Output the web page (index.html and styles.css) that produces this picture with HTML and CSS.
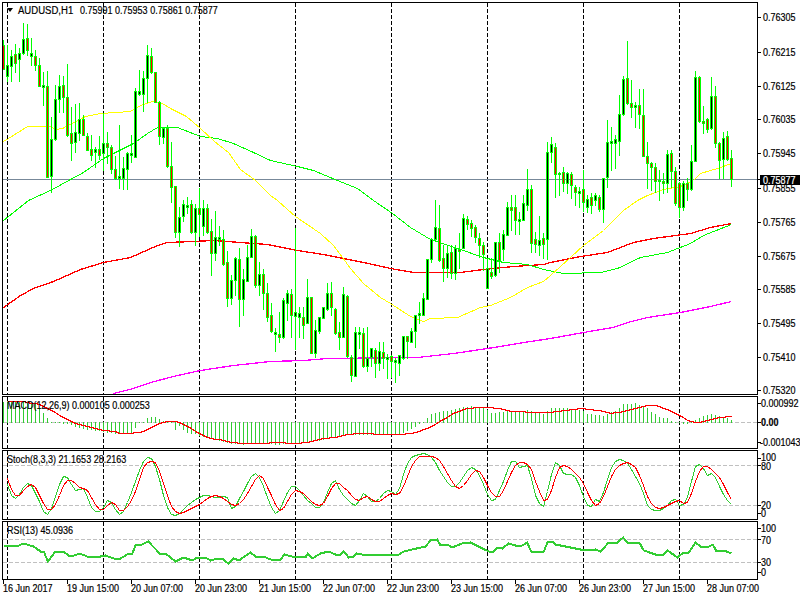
FILE: index.html
```html
<!DOCTYPE html>
<html lang="en">
<head>
<meta charset="utf-8">
<title>AUDUSD,H1</title>
<link rel="stylesheet" href="styles.css">
</head>
<body>
<main class="terminal">
  <section class="row row-main">
    <svg class="plot" id="plot-main" viewBox="3 3 754 391">
      <g id="main-layer"></g>
      <path class="marker" d="M7 8h6l-3 4z"/>
      <text class="label title" x="18" y="14">AUDUSD,H1</text>
      <text class="label" x="80" y="14">0.75991 0.75953 0.75861 0.75877</text>
    </svg>
    <svg class="axis" viewBox="758 2 42 393">
      <path class="tick" d="M758 17.5h3M758 52.5h3M758 86.5h3M758 119.5h3M758 153.5h3M758 188.5h3M758 222.5h3M758 256.5h3M758 289.5h3M758 323.5h3M758 357.5h3M758 390.5h3"/>
      <text class="label" x="763" y="21">0.76305</text>
      <text class="label" x="763" y="56">0.76215</text>
      <text class="label" x="763" y="90">0.76125</text>
      <text class="label" x="763" y="123">0.76035</text>
      <text class="label" x="763" y="157">0.75945</text>
      <text class="label" x="763" y="192">0.75855</text>
      <text class="label" x="763" y="226">0.75765</text>
      <text class="label" x="763" y="260">0.75675</text>
      <text class="label" x="763" y="293">0.75585</text>
      <text class="label" x="763" y="327">0.75495</text>
      <text class="label" x="763" y="361">0.75410</text>
      <text class="label" x="763" y="394">0.75320</text>
      <rect class="price-box" x="760" y="175" width="40" height="10"/>
      <path class="tick" d="M758 179.5h3"/>
      <text class="label price-text" x="763" y="184">0.75877</text>
    </svg>
  </section>
  <section class="row row-macd">
    <svg class="plot" id="plot-macd" viewBox="3 397 754 51">
      <g id="macd-layer"></g>
      <text class="label" x="7" y="409">MACD(12,26,9) 0.000105 0.000253</text>
    </svg>
    <svg class="axis" viewBox="758 396 42 53">
      <text class="label" x="761" y="407">0.000992</text>
      <text class="label bold" x="761" y="426">0.00</text>
      <text class="label" x="760" y="446">-0.001043</text>
      <path class="tick" d="M758 403.5h3M758 422.5h3M758 442.5h3"/>
    </svg>
  </section>
  <section class="row row-stoch">
    <svg class="plot" id="plot-stoch" viewBox="3 451 754 68">
      <g id="stoch-layer"></g>
      <text class="label" x="7" y="463">Stoch(8,3,3) 21.1653 28.2163</text>
    </svg>
    <svg class="axis" viewBox="758 450 42 70">
      <path class="tick" d="M758 458.5h3M758 465.5h3M758 505.5h3M758 513.5h3"/>
      <text class="label" x="761" y="461">100</text>
      <text class="label" x="761" y="470">80</text>
      <text class="label" x="761" y="509">20</text>
      <text class="label" x="761" y="517">0</text>
    </svg>
  </section>
  <section class="row row-rsi">
    <svg class="plot" id="plot-rsi" viewBox="3 522 754 57">
      <g id="rsi-layer"></g>
      <text class="label" x="7" y="534">RSI(13) 45.0936</text>
    </svg>
    <svg class="axis" viewBox="758 521 42 59">
      <path class="tick" d="M758 528.5h3M758 539.5h3M758 562.5h3M758 572.5h3"/>
      <text class="label" x="761" y="532">100</text>
      <text class="label" x="761" y="544">70</text>
      <text class="label" x="761" y="566">30</text>
      <text class="label" x="761" y="576">0</text>
    </svg>
  </section>
  <svg class="timeline" viewBox="0 580 800 20">
    <path class="tick" d="M3.5 580v4M67.5 580v4M131.5 580v4M195.5 580v4M259.5 580v4M323.5 580v4M387.5 580v4M451.5 580v4M515.5 580v4M579.5 580v4M643.5 580v4M707.5 580v4"/>
    <text class="label" x="3" y="592">16 Jun 2017</text>
    <text class="label" x="67" y="592">19 Jun 15:00</text>
    <text class="label" x="131" y="592">20 Jun 07:00</text>
    <text class="label" x="195" y="592">20 Jun 23:00</text>
    <text class="label" x="259" y="592">21 Jun 15:00</text>
    <text class="label" x="323" y="592">22 Jun 07:00</text>
    <text class="label" x="387" y="592">22 Jun 23:00</text>
    <text class="label" x="451" y="592">23 Jun 15:00</text>
    <text class="label" x="515" y="592">26 Jun 07:00</text>
    <text class="label" x="579" y="592">26 Jun 23:00</text>
    <text class="label" x="643" y="592">27 Jun 15:00</text>
    <text class="label" x="707" y="592">28 Jun 07:00</text>
  </svg>
</main>
<script src="chart.js"></script>
</body>
</html>
```
FILE: styles.css
```css
* { box-sizing: border-box; }
html, body { margin: 0; background: #fff; }
.terminal {
  width: 800px;
  height: 600px;
  padding: 2px 0 0 2px;
  display: flex;
  flex-direction: column;
  gap: 1px;
  overflow: hidden;
  background: #fff;
}
.row { display: flex; flex: none; }
.row-main { height: 393px; }
.row-macd { height: 53px; }
.row-stoch { height: 70px; }
.row-rsi { height: 59px; margin-bottom: -1px; }
.plot {
  flex: none;
  width: 756px;
  height: 100%;
  border: 1px solid #000;
  display: block;
}
.axis { flex: none; width: 42px; height: 100%; display: block; }
.timeline { flex: none; width: 800px; height: 20px; margin-left: -2px; display: block; }
.label {
  font-family: "Liberation Sans", sans-serif;
  font-size: 11px;
  fill: #000;
  stroke: #000;
  stroke-width: 0.2px;
  transform-box: fill-box;
  transform-origin: 0 50%;
  transform: scaleX(0.82);
}
.title { transform: scaleX(0.87); }
.bold { font-weight: 700; }
.price-text { fill: #fff; stroke: #fff; }
.price-box { fill: #000; }
.marker { fill: #000; }
.tick { stroke: #000; stroke-width: 1; fill: none; shape-rendering: crispEdges; }
.grid { stroke: #000; stroke-width: 1; stroke-dasharray: 4 2; shape-rendering: crispEdges; }
.level { stroke: #c0c0c0; stroke-width: 1; stroke-dasharray: 4 2; shape-rendering: crispEdges; }
.price-line { stroke: #778899; stroke-width: 1; shape-rendering: crispEdges; }
.line { fill: none; stroke-width: 1; shape-rendering: crispEdges; }
.line-yellow { stroke: #ffff00; }
.line-lime { stroke: #00ff00; }
.line-red { stroke: #ff0000; stroke-width: 1.3; }
.line-magenta { stroke: #ff00ff; stroke-width: 1.3; }
.line-signal { stroke: #ff0000; }
.line-main { stroke: #32cd32; }
.line-rsi { stroke: #32cd32; stroke-width: 2; }
.hist { stroke: #32cd32; stroke-width: 1; shape-rendering: crispEdges; }
.wick, .body { fill: #00ff00; shape-rendering: crispEdges; }
.fill-bull { fill: #000; shape-rendering: crispEdges; }
.fill-bear { fill: #ff0000; shape-rendering: crispEdges; }
```
FILE: chart.js
```js
var NS = 'http://www.w3.org/2000/svg';
function el(parent, name, attrs) {
  var n = document.createElementNS(NS, name);
  for (var k in attrs) n.setAttribute(k, attrs[k]);
  parent.appendChild(n);
  return n;
}
function rect(p, c, x, y, w, h) { el(p, 'rect', { 'class': c, x: x, y: y, width: w, height: h }); }
function pairs(a, ox, oy) {
  var out = [];
  for (var i = 0; i < a.length; i += 2) out.push([ox + a[i] / 3, oy + a[i + 1] / 3]);
  return out;
}
function merge() {
  var out = [];
  for (var i = 0; i < arguments.length; i++) arguments[i].forEach(function (p) {
    if (!out.length || p[0] > out[out.length - 1][0]) out.push(p);
  });
  return out;
}
/* resample a hand-read curve on the 4px bar grid, with a Catmull-Rom through the points */
function bars(pts) {
  var out = [], n = pts.length;
  for (var i = 0; 3 + 4 * i <= pts[n - 1][0] + 0.5; i++) {
    var x = 3 + 4 * i;
    if (x < pts[0][0]) continue;
    var k = 0;
    while (k < n - 2 && pts[k + 1][0] < x) k++;
    var p0 = pts[Math.max(k - 1, 0)], p1 = pts[k], p2 = pts[k + 1], p3 = pts[Math.min(k + 2, n - 1)];
    var t = (x - p1[0]) / (p2[0] - p1[0]);
    var m1 = (p2[1] - p0[1]) / (p2[0] - p0[0]) * (p2[0] - p1[0]);
    var m2 = (p3[1] - p1[1]) / (p3[0] - p1[0]) * (p2[0] - p1[0]);
    var t2 = t * t, t3 = t2 * t;
    out.push([x, (2 * t3 - 3 * t2 + 1) * p1[1] + (t3 - 2 * t2 + t) * m1 + (3 * t2 - 2 * t3) * p2[1] + (t3 - t2) * m2]);
  }
  return out;
}
function poly(p, c, pts) {
  var s = pts.map(function (q) { return (q[0] + 0.5).toFixed(1) + ',' + (Math.round(q[1]) + 0.5).toFixed(1); }).join(' ');
  el(p, 'polyline', { 'class': 'line ' + c, points: s });
}
function raw(a) { return pairs(a.map(function (v) { return v * 3; }), 0, 0); }
function grid(p, y1, y2) {
  [7, 103, 199, 295, 391, 487, 583, 679].forEach(function (x) {
    el(p, 'line', { 'class': 'grid', x1: x + 0.5, x2: x + 0.5, y1: y1, y2: y2 });
  });
}
function level(p, y) { el(p, 'line', { 'class': 'level', x1: 3, x2: 757, y1: y + 0.5, y2: y + 0.5 }); }

/* top, bottom, high, low, bull */
var candles = [
[45,69,40,69,0],[65,76,45,81,1],[56,66,50,81,1],[54,63,44,72,0],[53,59,48,81,1],[39,53,23,54,1],[38,50,24,55,0],[53,56,38,65,1],
[56,65,50,70,0],[65,86,58,86,0],[85,87,72,105,1],[86,177,71,177,0],[139,176,117,192,1],[99,139,85,140,1],[86,99,75,112,1],[85,97,76,112,0],
[97,135,64,136,0],[133,143,107,160,0],[132,142,104,152,1],[119,133,103,140,1],[119,135,115,135,0],[136,150,133,150,0],[149,155,135,160,0],[149,152,147,167,1],
[149,155,136,159,0],[143,153,113,170,1],[143,147,132,163,0],[147,169,145,173,0],[169,178,156,179,0],[176,178,125,188,1],[168,178,157,189,1],[153,169,152,189,1],
[153,155,135,162,1],[91,157,88,157,1],[91,94,70,95,1],[78,94,71,111,1],[55,78,45,102,1],[56,72,48,73,0],[72,102,72,102,0],[102,136,101,144,0],
[128,137,127,143,1],[128,166,125,167,0],[166,187,142,202,0],[186,232,186,237,0],[217,232,207,246,1],[204,216,200,221,1],[205,207,197,213,1],[204,232,200,233,0],
[208,232,204,245,1],[208,214,188,236,0],[208,226,200,235,1],[208,232,204,233,0],[231,253,219,275,0],[237,253,211,260,1],[237,239,226,245,1],[239,264,230,265,0],
[262,298,251,306,0],[280,298,275,304,1],[258,280,257,295,1],[259,299,248,326,0],[279,299,269,315,1],[257,281,245,281,1],[236,257,229,257,1],[236,285,235,287,0],
[274,285,262,295,1],[274,293,269,309,0],[293,317,283,321,0],[315,331,303,332,0],[332,334,328,351,1],[334,337,312,342,0],[300,337,298,338,1],[293,303,290,320,1],
[294,315,289,337,0],[312,316,228,349,1],[313,317,307,337,1],[317,325,307,338,0],[297,323,279,323,1],[297,353,297,353,0],[330,353,320,357,1],[317,331,317,333,1],
[307,318,307,318,1],[293,309,283,310,1],[293,307,282,315,0],[309,333,308,334,0],[332,337,322,349,0],[294,337,287,337,1],[296,356,295,357,0],[357,375,355,381,0],
[332,376,327,376,1],[332,334,327,348,1],[333,366,328,367,0],[358,366,327,371,1],[348,357,348,366,1],[350,363,348,377,0],[351,363,342,370,1],[352,358,342,368,0],
[357,359,354,378,1],[356,361,355,377,0],[360,362,358,382,1],[355,363,355,375,1],[336,358,336,359,1],[336,341,336,358,0],[331,342,328,342,1],[315,331,315,347,1],
[313,315,302,323,1],[298,315,293,315,1],[259,299,259,299,1],[239,259,238,262,1],[227,239,200,240,1],[228,260,205,261,0],[258,268,245,281,0],[253,268,245,277,1],
[252,273,245,278,0],[248,273,245,279,1],[249,251,233,268,0],[218,248,214,248,1],[219,224,216,229,0],[223,228,220,236,0],[227,237,225,242,0],[238,245,233,257,0],
[245,254,242,270,0],[268,288,258,288,1],[272,276,258,278,0],[242,275,242,276,1],[242,260,233,272,0],[234,249,230,260,1],[207,235,202,235,1],[207,210,195,230,0],
[207,220,195,234,0],[219,221,212,234,1],[203,220,195,220,1],[189,205,169,210,1],[189,243,185,252,0],[239,244,232,252,0],[240,245,216,255,1],[238,244,233,258,0],
[152,239,142,259,1],[144,152,137,162,1],[147,174,143,197,0],[173,174,172,195,1],[172,183,167,191,0],[173,183,172,193,1],[174,185,172,198,0],[187,192,185,205,0],
[191,193,187,207,1],[189,202,170,211,0],[199,207,195,212,1],[197,205,193,213,0],[195,200,193,205,1],[197,209,195,211,0],[178,209,178,222,1],[142,177,120,187,1],
[141,143,127,170,1],[139,143,135,168,1],[114,141,95,155,1],[79,114,76,115,1],[78,103,41,104,0],[103,107,80,117,0],[105,107,102,127,1],[105,114,89,128,0],
[115,156,89,156,0],[156,163,142,188,0],[163,167,162,190,0],[167,181,163,192,0],[180,181,170,200,1],[181,183,173,193,0],[154,183,150,192,1],[153,171,150,187,0],
[171,203,167,205,0],[183,207,182,217,0],[183,207,181,210,1],[183,189,178,200,0],[161,189,145,190,1],[77,161,71,161,1],[77,121,76,122,0],[121,123,106,133,0],
[119,129,118,132,0],[96,128,77,129,1],[96,143,86,147,0],[143,160,142,178,0],[138,159,132,178,1],[136,159,131,160,0],[158,179,150,186,0]
];

var yellow = raw([3,141,8,138,27,126,50,126,55,129,62,128,85,116,100,113,130,111,140,105,152,101,160,102,172,109,186,116,200,128,214,141,228,152,240,169,255,180,270,195,277,200,295,216,320,233,333,245,342,257,350,268,363,283,380,297,390,303,410,316,423,321,430,318,457,317,480,307,490,305,510,297,527,287,543,281,550,275,570,257,583,245,603,230,623,210,637,200,647,195,663,189,680,186,693,180,700,173,717,168,731,163]);
var lime = raw([3,220,28,200,50,190,70,179,83,172,103,158,133,143,147,133,157,127,177,127,200,136,217,138,233,143,253,152,270,160,297,166,313,170,337,180,357,188,373,200,392,213,410,227,430,239,457,248,483,257,503,262,527,264,543,269,563,273,600,272,617,268,640,257,667,252,690,243,703,235,731,224]);
var red = raw([3,307,20,295,33,288,53,281,80,269,103,262,130,257,157,245,167,242,193,241,213,240,240,242,267,244,297,250,323,254,363,262,390,268,413,272,460,272,483,269,513,266,543,264,550,262,580,256,607,252,633,242,653,238,690,233,710,227,731,223]);
var magenta = raw([113,393,133,388,150,382,173,376,200,370,233,365,270,361,303,360,327,358,417,357,453,353,487,348,530,341,550,338,583,332,613,327,627,322,647,317,680,312,710,306,731,301]);

var mainLayer = document.getElementById('main-layer');
grid(mainLayer, 3, 394);
el(mainLayer, 'line', { 'class': 'price-line', x1: 3, x2: 757, y1: 179.5, y2: 179.5 });
poly(mainLayer, 'line-magenta', magenta);
poly(mainLayer, 'line-red', red);
poly(mainLayer, 'line-lime', lime);
poly(mainLayer, 'line-yellow', yellow);
candles.forEach(function (c, i) {
  var x = 3 + 4 * i, top = c[0], bot = c[1];
  rect(mainLayer, 'wick', x, c[2], 1, c[3] - c[2] + 1);
  rect(mainLayer, 'body', x - 1, top, 3, bot - top + 1);
  if (bot - top > 1) rect(mainLayer, c[4] ? 'fill-bull' : 'fill-bear', x, top + 1, 1, bot - top - 1);
});

/* MACD */
var hist = [37,37,37,37,37,37,37,38,40,55,70,85,97,97,97,99,100,103,108,110,113,117,118,120,120,123,125,125,128,130,130,128,125,110,97,97,85,82,82,88,92,95,97,118,105,118,125,128,130,135,138,142,145,145,150,152,155,160,158,158,162,160,160,160,158,158,158,
160,162,163,160,160,158,158,158,155,155,152,150,150,148,145,142,140,138,135,132,132,132,132,132,132,132,130,130,130,130,130,130,128,125,120,115,108,100,97,85,73,68,65,62,62,60,58,55,52,50,47,52,53,53,60,68,68,65,65,62,65,62,62,62,60,
62,68,68,72,62,55,55,55,55,55,60,60,60,62,72,73,75,75,78,72,65,62,55,43,42,42,40,45,48,55,67,72,80,85,85,92,97,97,100,100,97,90,85,78,75,72,75,78,80,83,90];
var macdLayer = document.getElementById('macd-layer');
grid(macdLayer, 397, 448);
level(macdLayer, 422);
hist.forEach(function (v, i) {
  var y = Math.round(390 + v / 3), x = 3 + 4 * i + 0.5;
  el(macdLayer, 'line', { 'class': 'hist', x1: x, x2: x, y1: Math.min(y, 422), y2: Math.max(y, 422) + 1 });
});
poly(macdLayer, 'line-signal', bars(merge(
  pairs([10,35,60,32,90,37,130,48,170,70,230,100,300,117,340,123,360,128,400,128,440,118,480,98,515,92,545,100,590,125,620,140,680,152,730,160,800,158], 0, 390),
  pairs([0,157,100,157,140,148,200,140,250,130,300,130,330,132,410,130,460,118,500,98,560,65,610,52,670,52,720,62,790,65], 270, 390),
  pairs([60,65,150,55,200,60,240,68,280,62,340,47,380,47,440,70,480,93,520,93,560,82,603,78], 530, 390))));

/* Stochastic */
var stochLayer = document.getElementById('stoch-layer');
grid(stochLayer, 451, 519);
level(stochLayer, 465);
level(stochLayer, 505);
poly(stochLayer, 'line-main', bars(merge(
  pairs([10,245,35,320,50,320,85,277,110,320,142,372,190,258,225,300,250,295,275,355,300,363,325,328,360,373,395,300,430,212,460,215,500,350,525,375,565,342,610,315,650,322,680,320,695,355,720,320,760,250,780,265,810,345], 0, 390),
  pairs([20,368,65,287,110,328,150,350,190,268,210,303,255,345,280,310,310,335,355,298,380,310,410,220,435,195,480,197,520,260,550,290,610,232,665,332,690,295,725,212,750,232,775,230,790,300], 270, 390),
  pairs([30,345,40,345,75,215,100,250,135,260,175,350,195,328,210,330,245,228,280,210,330,285,355,350,400,355,430,325,450,345,470,325,495,228,515,228,533,258,548,250,580,315,603,342], 530, 390))));
poly(stochLayer, 'line-signal', bars(merge(
  pairs([10,228,30,290,50,318,95,282,140,355,160,350,200,270,240,293,260,300,300,360,335,335,365,362,400,315,430,230,450,213,470,225,510,340,530,368,550,365,600,340,640,315,670,325,700,345,730,325,780,255,810,310], 0, 390),
  pairs([30,362,75,300,150,345,195,278,225,295,260,330,290,318,320,335,360,310,390,305,425,225,445,200,490,200,510,215,565,293,620,240,670,315,690,315,740,220,780,230,790,260], 270, 390),
  pairs([40,330,55,320,90,228,150,265,190,342,210,335,250,245,290,217,320,240,360,335,390,355,410,345,445,330,470,337,515,232,565,260,603,328], 530, 390))));

/* RSI */
var rsiLayer = document.getElementById('rsi-layer');
grid(rsiLayer, 522, 579);
level(rsiLayer, 539);
level(rsiLayer, 562);
poly(rsiLayer, 'line-rsi', merge(
  pairs([10,465,55,465,68,460,100,468,120,482,130,483,142,513,165,483,188,483,205,495,220,495,238,490,260,497,300,497,315,494,340,503,360,503,385,490,395,488,405,466,425,462,443,453,478,488,495,488,525,512,550,502,575,510,590,500,615,500,630,510,650,503,665,505,683,520,700,503,715,510,750,485,765,497,790,497,810,507], 0, 390),
  pairs([28,510,42,492,65,497,105,500,112,490,125,503,150,490,175,483,195,493,210,493,220,483,235,500,250,498,258,490,275,493,300,492,340,492,380,495,400,483,425,478,465,468,480,450,500,448,510,465,530,463,545,470,575,458,600,455,655,482,670,482,680,470,695,475,715,458,735,465,755,465,770,456,782,482,790,482], 270, 390),
  pairs([40,482,52,452,65,452,75,463,120,470,165,480,195,477,210,483,235,457,260,455,278,440,290,455,328,458,340,480,375,492,400,492,412,480,440,500,455,490,475,487,495,455,510,467,530,470,547,463,558,482,580,480,603,490], 530, 390)));
```
